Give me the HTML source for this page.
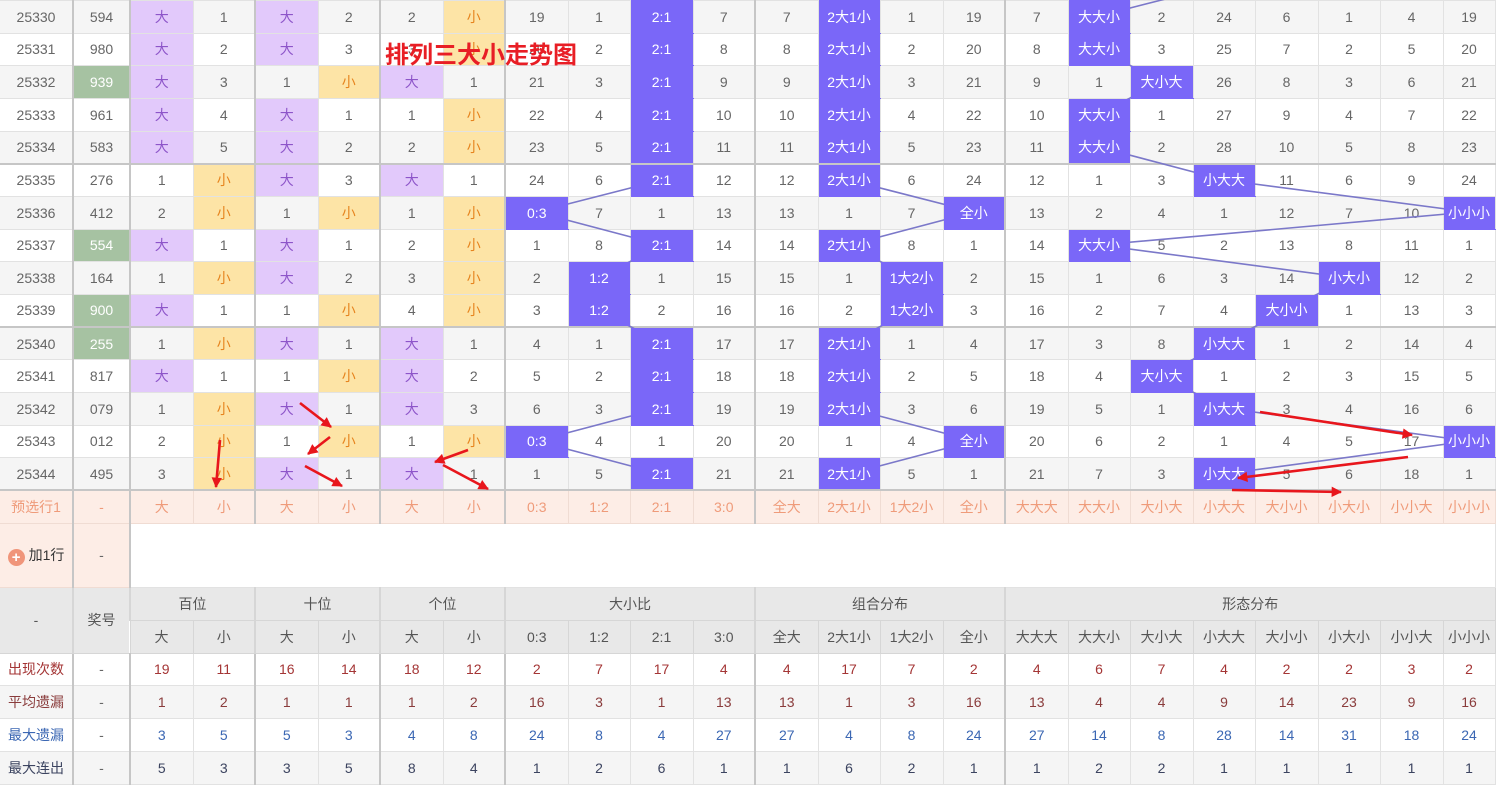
<!DOCTYPE html>
<html><head><meta charset="utf-8">
<style>
*{margin:0;padding:0;box-sizing:border-box}
body{width:1505px;height:784px;overflow:hidden;background:#fff;position:relative;font-family:"Liberation Sans","Noto Sans CJK SC",sans-serif}
table{border-collapse:collapse;table-layout:fixed;width:1495px;position:absolute;left:0;top:0}
td{border:1px solid #e2e2e2;text-align:center;font-size:14px;color:#666;white-space:nowrap;overflow:hidden;padding:0}
td:first-child{border-left:none}
tr.r{height:32.67px}
tr.g td{background:#f5f5f5}
tr.r td:nth-child(2),tr.r td:nth-child(3),tr.r td:nth-child(5),tr.r td:nth-child(7),tr.r td:nth-child(9),tr.r td:nth-child(13),tr.r td:nth-child(17){border-left:2px solid #c6c6c6}
.L{border-left:2px solid #c6c6c6}
tr.sep td{border-bottom:2px solid #c6c6c6}
td.p{background:#e2c9fb!important;color:#8d55c9}
td.y{background:#fde4a6!important;color:#e6841e}
td.n{background:#a6c2a2!important;color:#fff}
td.b{background:#7a67f8!important;color:#fff;position:relative;z-index:2;border-top-color:#7a67f8;border-bottom-color:#7a67f8}
tr.pre td{background:#fdede6;color:#ef9b7a;border-color:#f0dcd3}
tr.add td{height:64px}
tr.hd td{background:#e8e8e8;color:#555;border-color:#d6d6d6;height:33px}
tr.st{height:32.75px}
.c1 td{color:#a43535}.c2 td{color:#8a3c3c}.c3 td{color:#3b67b3}.c4 td{color:#3c4460}
.c1 td:nth-child(2),.c2 td:nth-child(2),.c3 td:nth-child(2),.c4 td:nth-child(2){color:#666}
.title{position:absolute;left:385px;top:35px;font-size:24px;font-weight:bold;color:#e81e25;z-index:4;font-family:"Liberation Sans","Noto Sans CJK SC",sans-serif}
svg{position:absolute;left:0;top:0}
</style></head><body>
<table>
<colgroup><col style="width:73px"><col style="width:57px"><col style="width:63px"><col style="width:62px"><col style="width:63px"><col style="width:62px"><col style="width:63px"><col style="width:62px"><col style="width:63px"><col style="width:62px"><col style="width:63px"><col style="width:62px"><col style="width:63px"><col style="width:62px"><col style="width:63px"><col style="width:62px"><col style="width:63px"><col style="width:62px"><col style="width:63px"><col style="width:62px"><col style="width:63px"><col style="width:62px"><col style="width:63px"><col style="width:52px"></colgroup>
<tr class="r g"><td>25330</td><td>594</td><td class="p">大</td><td>1</td><td class="p">大</td><td>2</td><td>2</td><td class="y">小</td><td>19</td><td>1</td><td class="b">2:1</td><td>7</td><td>7</td><td class="b">2大1小</td><td>1</td><td>19</td><td>7</td><td class="b">大大小</td><td>2</td><td>24</td><td>6</td><td>1</td><td>4</td><td>19</td></tr>
<tr class="r"><td>25331</td><td>980</td><td class="p">大</td><td>2</td><td class="p">大</td><td>3</td><td>3</td><td class="y">小</td><td>20</td><td>2</td><td class="b">2:1</td><td>8</td><td>8</td><td class="b">2大1小</td><td>2</td><td>20</td><td>8</td><td class="b">大大小</td><td>3</td><td>25</td><td>7</td><td>2</td><td>5</td><td>20</td></tr>
<tr class="r g"><td>25332</td><td class="n">939</td><td class="p">大</td><td>3</td><td>1</td><td class="y">小</td><td class="p">大</td><td>1</td><td>21</td><td>3</td><td class="b">2:1</td><td>9</td><td>9</td><td class="b">2大1小</td><td>3</td><td>21</td><td>9</td><td>1</td><td class="b">大小大</td><td>26</td><td>8</td><td>3</td><td>6</td><td>21</td></tr>
<tr class="r"><td>25333</td><td>961</td><td class="p">大</td><td>4</td><td class="p">大</td><td>1</td><td>1</td><td class="y">小</td><td>22</td><td>4</td><td class="b">2:1</td><td>10</td><td>10</td><td class="b">2大1小</td><td>4</td><td>22</td><td>10</td><td class="b">大大小</td><td>1</td><td>27</td><td>9</td><td>4</td><td>7</td><td>22</td></tr>
<tr class="r g sep"><td>25334</td><td>583</td><td class="p">大</td><td>5</td><td class="p">大</td><td>2</td><td>2</td><td class="y">小</td><td>23</td><td>5</td><td class="b">2:1</td><td>11</td><td>11</td><td class="b">2大1小</td><td>5</td><td>23</td><td>11</td><td class="b">大大小</td><td>2</td><td>28</td><td>10</td><td>5</td><td>8</td><td>23</td></tr>
<tr class="r"><td>25335</td><td>276</td><td>1</td><td class="y">小</td><td class="p">大</td><td>3</td><td class="p">大</td><td>1</td><td>24</td><td>6</td><td class="b">2:1</td><td>12</td><td>12</td><td class="b">2大1小</td><td>6</td><td>24</td><td>12</td><td>1</td><td>3</td><td class="b">小大大</td><td>11</td><td>6</td><td>9</td><td>24</td></tr>
<tr class="r g"><td>25336</td><td>412</td><td>2</td><td class="y">小</td><td>1</td><td class="y">小</td><td>1</td><td class="y">小</td><td class="b">0:3</td><td>7</td><td>1</td><td>13</td><td>13</td><td>1</td><td>7</td><td class="b">全小</td><td>13</td><td>2</td><td>4</td><td>1</td><td>12</td><td>7</td><td>10</td><td class="b">小小小</td></tr>
<tr class="r"><td>25337</td><td class="n">554</td><td class="p">大</td><td>1</td><td class="p">大</td><td>1</td><td>2</td><td class="y">小</td><td>1</td><td>8</td><td class="b">2:1</td><td>14</td><td>14</td><td class="b">2大1小</td><td>8</td><td>1</td><td>14</td><td class="b">大大小</td><td>5</td><td>2</td><td>13</td><td>8</td><td>11</td><td>1</td></tr>
<tr class="r g"><td>25338</td><td>164</td><td>1</td><td class="y">小</td><td class="p">大</td><td>2</td><td>3</td><td class="y">小</td><td>2</td><td class="b">1:2</td><td>1</td><td>15</td><td>15</td><td>1</td><td class="b">1大2小</td><td>2</td><td>15</td><td>1</td><td>6</td><td>3</td><td>14</td><td class="b">小大小</td><td>12</td><td>2</td></tr>
<tr class="r sep"><td>25339</td><td class="n">900</td><td class="p">大</td><td>1</td><td>1</td><td class="y">小</td><td>4</td><td class="y">小</td><td>3</td><td class="b">1:2</td><td>2</td><td>16</td><td>16</td><td>2</td><td class="b">1大2小</td><td>3</td><td>16</td><td>2</td><td>7</td><td>4</td><td class="b">大小小</td><td>1</td><td>13</td><td>3</td></tr>
<tr class="r g"><td>25340</td><td class="n">255</td><td>1</td><td class="y">小</td><td class="p">大</td><td>1</td><td class="p">大</td><td>1</td><td>4</td><td>1</td><td class="b">2:1</td><td>17</td><td>17</td><td class="b">2大1小</td><td>1</td><td>4</td><td>17</td><td>3</td><td>8</td><td class="b">小大大</td><td>1</td><td>2</td><td>14</td><td>4</td></tr>
<tr class="r"><td>25341</td><td>817</td><td class="p">大</td><td>1</td><td>1</td><td class="y">小</td><td class="p">大</td><td>2</td><td>5</td><td>2</td><td class="b">2:1</td><td>18</td><td>18</td><td class="b">2大1小</td><td>2</td><td>5</td><td>18</td><td>4</td><td class="b">大小大</td><td>1</td><td>2</td><td>3</td><td>15</td><td>5</td></tr>
<tr class="r g"><td>25342</td><td>079</td><td>1</td><td class="y">小</td><td class="p">大</td><td>1</td><td class="p">大</td><td>3</td><td>6</td><td>3</td><td class="b">2:1</td><td>19</td><td>19</td><td class="b">2大1小</td><td>3</td><td>6</td><td>19</td><td>5</td><td>1</td><td class="b">小大大</td><td>3</td><td>4</td><td>16</td><td>6</td></tr>
<tr class="r"><td>25343</td><td>012</td><td>2</td><td class="y">小</td><td>1</td><td class="y">小</td><td>1</td><td class="y">小</td><td class="b">0:3</td><td>4</td><td>1</td><td>20</td><td>20</td><td>1</td><td>4</td><td class="b">全小</td><td>20</td><td>6</td><td>2</td><td>1</td><td>4</td><td>5</td><td>17</td><td class="b">小小小</td></tr>
<tr class="r g sep"><td>25344</td><td>495</td><td>3</td><td class="y">小</td><td class="p">大</td><td>1</td><td class="p">大</td><td>1</td><td>1</td><td>5</td><td class="b">2:1</td><td>21</td><td>21</td><td class="b">2大1小</td><td>5</td><td>1</td><td>21</td><td>7</td><td>3</td><td class="b">小大大</td><td>5</td><td>6</td><td>18</td><td>1</td></tr>
<tr class="r pre"><td>预选行1</td><td>-</td><td>大</td><td>小</td><td>大</td><td>小</td><td>大</td><td>小</td><td>0:3</td><td>1:2</td><td>2:1</td><td>3:0</td><td>全大</td><td>2大1小</td><td>1大2小</td><td>全小</td><td>大大大</td><td>大大小</td><td>大小大</td><td>小大大</td><td>大小小</td><td>小大小</td><td>小小大</td><td>小小小</td></tr>
<tr class="add"><td style="background:#fdede6;color:#333;border-color:#f0dcd3;border-left:none"><span style="display:inline-block;width:17px;height:17px;border-radius:50%;background:#f0957a;color:#fff;font-size:15px;line-height:17px;font-weight:bold;vertical-align:-2px;margin-right:4px">+</span>加1行</td><td class="L" style="background:#fdede6;border-color:#f0dcd3;border-left:2px solid #c6c6c6">-</td><td colspan="22" class="L" style="background:#fff"></td></tr>
<tr class="hd"><td rowspan="2">-</td><td rowspan="2" class="L">奖号</td><td colspan="2" class="L">百位</td><td colspan="2" class="L">十位</td><td colspan="2" class="L">个位</td><td colspan="4" class="L">大小比</td><td colspan="4" class="L">组合分布</td><td colspan="8" class="L">形态分布</td></tr>
<tr class="hd"><td class="L">大</td><td>小</td><td class="L">大</td><td>小</td><td class="L">大</td><td>小</td><td class="L">0:3</td><td>1:2</td><td>2:1</td><td>3:0</td><td class="L">全大</td><td>2大1小</td><td>1大2小</td><td>全小</td><td class="L">大大大</td><td>大大小</td><td>大小大</td><td>小大大</td><td>大小小</td><td>小大小</td><td>小小大</td><td>小小小</td></tr>
<tr class="r st c1"><td>出现次数</td><td>-</td><td>19</td><td>11</td><td>16</td><td>14</td><td>18</td><td>12</td><td>2</td><td>7</td><td>17</td><td>4</td><td>4</td><td>17</td><td>7</td><td>2</td><td>4</td><td>6</td><td>7</td><td>4</td><td>2</td><td>2</td><td>3</td><td>2</td></tr>
<tr class="r st g c2"><td>平均遗漏</td><td>-</td><td>1</td><td>2</td><td>1</td><td>1</td><td>1</td><td>2</td><td>16</td><td>3</td><td>1</td><td>13</td><td>13</td><td>1</td><td>3</td><td>16</td><td>13</td><td>4</td><td>4</td><td>9</td><td>14</td><td>23</td><td>9</td><td>16</td></tr>
<tr class="r st c3"><td>最大遗漏</td><td>-</td><td>3</td><td>5</td><td>5</td><td>3</td><td>4</td><td>8</td><td>24</td><td>8</td><td>4</td><td>27</td><td>27</td><td>4</td><td>8</td><td>24</td><td>27</td><td>14</td><td>8</td><td>28</td><td>14</td><td>31</td><td>18</td><td>24</td></tr>
<tr class="r st g c4"><td>最大连出</td><td>-</td><td>5</td><td>3</td><td>3</td><td>5</td><td>8</td><td>4</td><td>1</td><td>2</td><td>6</td><td>1</td><td>1</td><td>6</td><td>2</td><td>1</td><td>1</td><td>2</td><td>2</td><td>1</td><td>1</td><td>1</td><td>1</td><td>1</td></tr>
</table>
<svg width="1505" height="784" style="z-index:1;pointer-events:none">
<g fill="none" stroke="#7b78c9" stroke-width="1.6">
<polyline points="661.5,180 536.5,212 661.5,245 599,278"/>
<polyline points="599,310 661.5,343"/>
<polyline points="661.5,408 536.5,441 661.5,474"/>
<polyline points="849,180 974,212 849,245 911.5,278"/>
<polyline points="911.5,310 849,343"/>
<polyline points="849,408 974,441 849,474"/>
<polyline points="1224,-16 1099,16"/>
<polyline points="1099,49 1161.5,82 1099,114"/>
<polyline points="1099,147 1224,180 1469,212 1099,245 1349,278 1286.5,310 1224,343 1161.5,376 1224,408 1469,441 1224,474"/>
</g>
</svg>
<div class="title">排列三大小走势图</div>
<svg width="1505" height="784" style="z-index:3;pointer-events:none">
<defs><marker id="a" viewBox="0 0 10 10" refX="9" refY="5" markerWidth="5" markerHeight="4" orient="auto"><path d="M0,0 L10,5 L0,10 Z" fill="#e8161c"/></marker></defs>
<g stroke="#e8161c" stroke-width="2.6" marker-end="url(#a)">
<line x1="300" y1="403" x2="331" y2="427"/>
<line x1="330" y1="437" x2="308" y2="454"/>
<line x1="305" y1="466" x2="342" y2="486"/>
<line x1="220" y1="440" x2="216" y2="487"/>
<line x1="468" y1="450" x2="435" y2="462"/>
<line x1="443" y1="465" x2="488" y2="489"/>
<line x1="1260" y1="412" x2="1412" y2="435"/>
<line x1="1408" y1="457" x2="1238" y2="478"/>
<line x1="1232" y1="490" x2="1341" y2="492"/>
</g>
</svg>
</body></html>
